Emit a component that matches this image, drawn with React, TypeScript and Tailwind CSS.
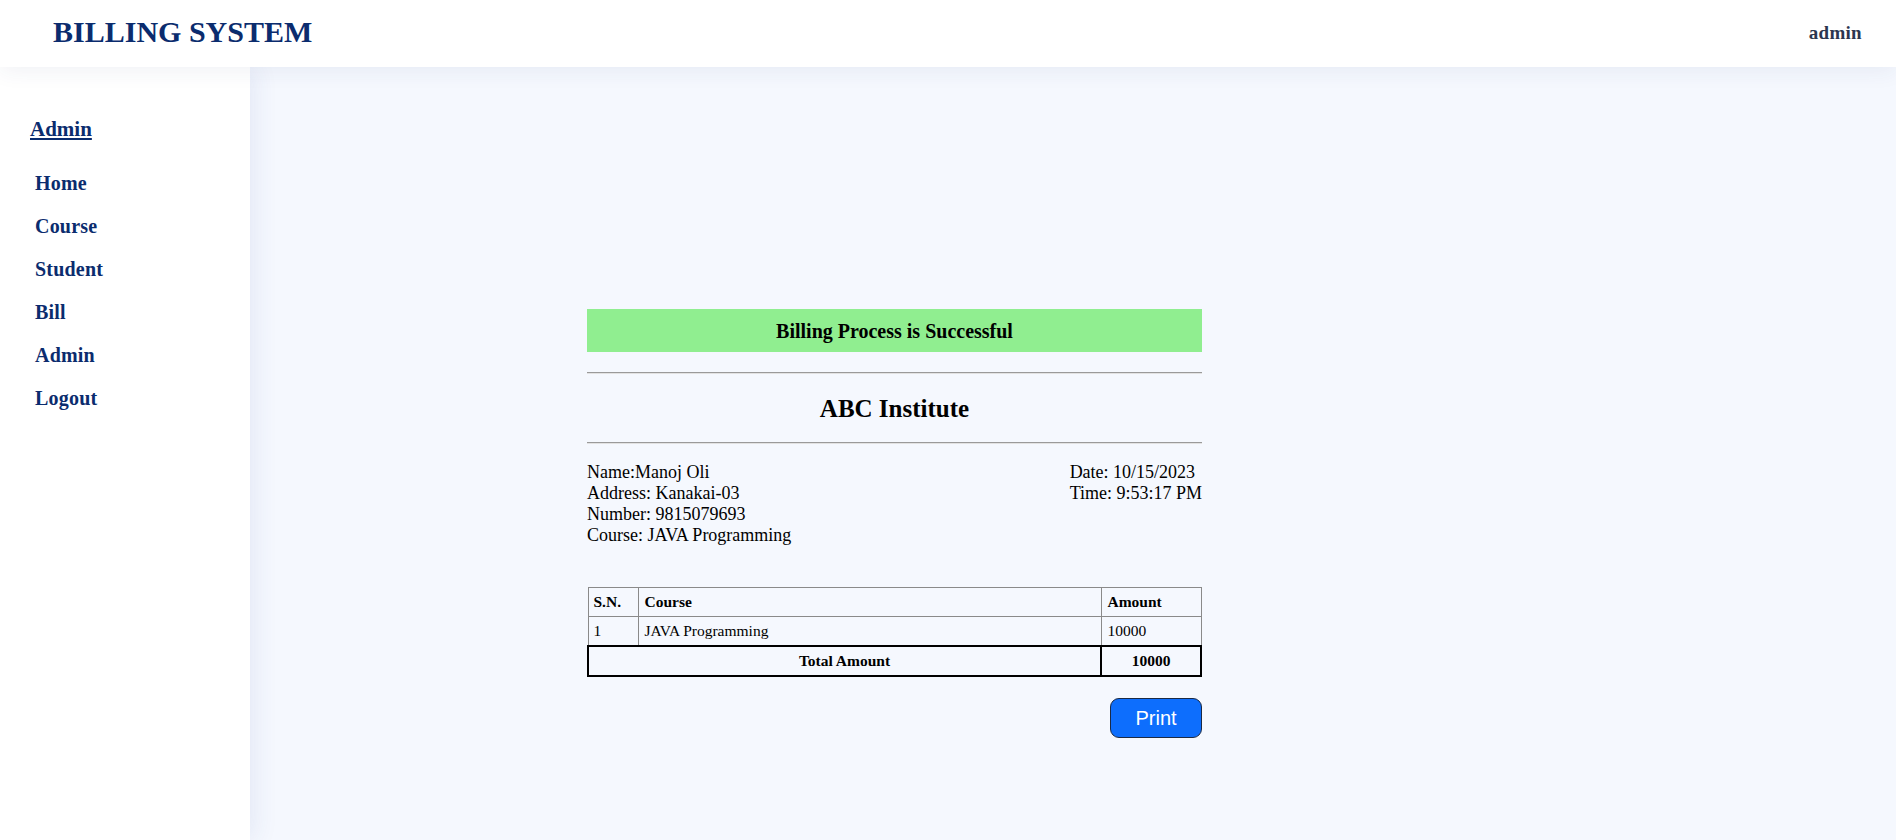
const navItems = ['Home', 'Course', 'Student', 'Bill', 'Admin', 'Logout'];

const student = {
  name: 'Manoj Oli',
  address: 'Kanakai-03',
  number: '9815079693',
  course: 'JAVA Programming',
};

export default function App() {
  return (
    <div className="min-h-screen flex flex-col bg-[#f5f8fe] font-['Liberation_Serif','Times_New_Roman',serif] text-black">
      <header className="relative z-20 h-[67px] shrink-0 bg-white flex items-center justify-between pl-[53px] pr-[34px] shadow-[0_4px_22px_rgba(40,60,120,0.07)]">
        <h1 className="text-[30px] leading-none font-bold text-[#0b2c6e] pb-[3px]">BILLING SYSTEM</h1>
        <span className="text-[19px] font-bold tracking-[0.3px] text-[#2b3650]">admin</span>
      </header>

      <div className="flex flex-1">
        <aside className="relative z-10 w-[250px] shrink-0 bg-white pt-[47px] shadow-[4px_0_24px_rgba(40,70,160,0.09)]">
          <h2 className="pl-[30px] text-[21px] font-bold underline text-[#0b2c6e]">Admin</h2>
          <nav className="mt-[16px] flex flex-col">
            {navItems.map((item) => (
              <a
                key={item}
                href="#"
                className="pl-[35px] py-[10px] text-[20px] leading-[23px] font-bold tracking-[0.2px] text-[#0b2c6e]"
              >
                {item}
              </a>
            ))}
          </nav>
        </aside>

        <main className="flex-1 pl-[337px] pt-[242px]">
          <div className="w-[615px]">
            <div className="h-[43px] bg-[#90ee90] flex items-center justify-center text-[20px] font-bold">
              Billing Process is Successful
            </div>

            <div className="mt-[20px] border-t border-b border-t-[#9a9a9a] border-b-[#e2e2e2]" />
            <h2 className="mt-[16px] text-center text-[25px] font-bold">ABC Institute</h2>
            <div className="mt-[14px] border-t border-b border-t-[#9a9a9a] border-b-[#e2e2e2]" />

            <div className="mt-[18px] flex justify-between text-[18px] leading-[21px]">
              <div>
                <div>Name:{student.name}</div>
                <div>Address: {student.address}</div>
                <div>Number: {student.number}</div>
                <div>Course: {student.course}</div>
              </div>
              <div>
                <div>Date: 10/15/2023</div>
                <div>Time: 9:53:17 PM</div>
              </div>
            </div>

            <table className="mt-[41px] w-full border-collapse text-[15.5px] leading-[18px]">
              <thead>
                <tr>
                  <th className="w-[50px] border border-[#8a8a8a] px-[5px] py-[5px] text-left font-bold">S.N.</th>
                  <th className="border border-[#8a8a8a] px-[6px] py-[5px] text-left font-bold">Course</th>
                  <th className="w-[100px] border border-[#8a8a8a] px-[6px] py-[5px] text-left font-bold">Amount</th>
                </tr>
              </thead>
              <tbody>
                <tr>
                  <td className="border border-[#8a8a8a] px-[5px] py-[5px]">1</td>
                  <td className="border border-[#8a8a8a] px-[6px] py-[5px]">{student.course}</td>
                  <td className="border border-[#8a8a8a] px-[6px] py-[5px]">10000</td>
                </tr>
                <tr>
                  <td colSpan={2} className="border-2 border-black px-[5px] py-[5px] text-center font-bold">
                    Total Amount
                  </td>
                  <td className="border-2 border-black px-[5px] py-[5px] text-center font-bold">10000</td>
                </tr>
              </tbody>
            </table>

            <div className="mt-[21px] flex justify-end">
              <button className="w-[92px] h-[40px] rounded-[9px] border border-[#1b2a44] bg-[#0d6efd] text-white text-[20px] font-['Liberation_Sans',Arial,sans-serif]">
                Print
              </button>
            </div>
          </div>
        </main>
      </div>
    </div>
  );
}
